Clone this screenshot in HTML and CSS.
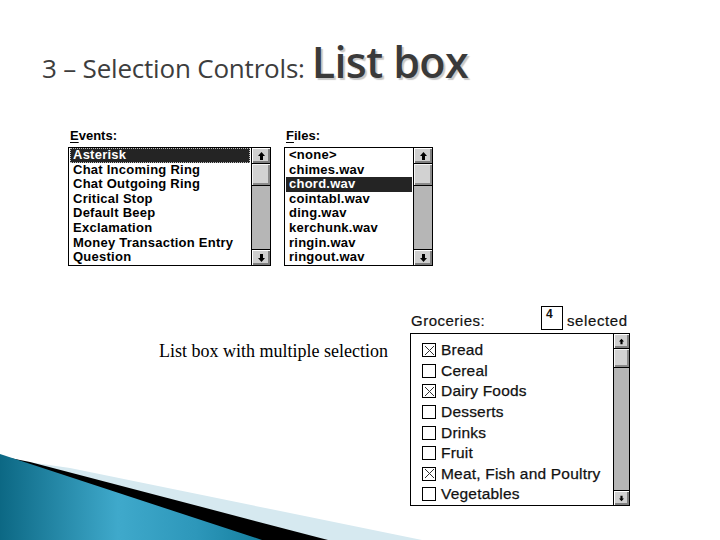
FILE: index.html
```html
<!DOCTYPE html>
<html lang="en">
<head>
<meta charset="utf-8">
<title>Selection Controls: List box</title>
<link rel="stylesheet" href="styles.css">
</head>
<body>
<div class="slide">
  <h1 class="title"><span class="sub">3 – Selection Controls:</span><span class="main">List box</span></h1>

  <div class="top-row">
    <div class="group events">
      <div class="label"><u>E</u>vents:</div>
      <div class="listbox">
        <ul class="items">
          <li class="sel focus">Asterisk</li>
          <li>Chat Incoming Ring</li>
          <li>Chat Outgoing Ring</li>
          <li>Critical Stop</li>
          <li>Default Beep</li>
          <li>Exclamation</li>
          <li>Money Transaction Entry</li>
          <li>Question</li>
        </ul>
        <div class="scrollbar">
          <div class="btn"><svg class="arrow" viewBox="0 0 7 8"><polygon points="3.5,0 7,4 5,4 5,8 2,8 2,4 0,4"/></svg></div>
          <div class="thumb"></div>
          <div class="track"></div>
          <div class="btn"><svg class="arrow" viewBox="0 0 7 8"><polygon points="3.5,8 7,4 5,4 5,0 2,0 2,4 0,4"/></svg></div>
        </div>
      </div>
    </div>

    <div class="group files">
      <div class="label"><u>F</u>iles:</div>
      <div class="listbox">
        <ul class="items">
          <li>&lt;none&gt;</li>
          <li>chimes.wav</li>
          <li class="sel">chord.wav</li>
          <li>cointabl.wav</li>
          <li>ding.wav</li>
          <li>kerchunk.wav</li>
          <li>ringin.wav</li>
          <li>ringout.wav</li>
        </ul>
        <div class="scrollbar">
          <div class="btn"><svg class="arrow" viewBox="0 0 7 8"><polygon points="3.5,0 7,4 5,4 5,8 2,8 2,4 0,4"/></svg></div>
          <div class="thumb"></div>
          <div class="track"></div>
          <div class="btn"><svg class="arrow" viewBox="0 0 7 8"><polygon points="3.5,8 7,4 5,4 5,0 2,0 2,4 0,4"/></svg></div>
        </div>
      </div>
    </div>
  </div>

  <div class="bottom-row">
    <p class="caption">List box with multiple selection</p>
    <div class="group groceries">
      <div class="gheader">
        <span class="glabel">Groceries:</span>
        <span class="count">4</span>
        <span class="selected">selected</span>
      </div>
      <div class="listbox big">
        <ul class="checks">
          <li><span class="cb on"><svg viewBox="0 0 11 11"><path d="M1 1L10 10M10 1L1 10"/></svg></span>Bread</li>
          <li><span class="cb"></span>Cereal</li>
          <li><span class="cb on"><svg viewBox="0 0 11 11"><path d="M1 1L10 10M10 1L1 10"/></svg></span>Dairy Foods</li>
          <li><span class="cb"></span>Desserts</li>
          <li><span class="cb"></span>Drinks</li>
          <li><span class="cb"></span>Fruit</li>
          <li><span class="cb on"><svg viewBox="0 0 11 11"><path d="M1 1L10 10M10 1L1 10"/></svg></span>Meat, Fish and Poultry</li>
          <li><span class="cb"></span>Vegetables</li>
        </ul>
        <div class="scrollbar small">
          <div class="btn"><svg class="arrow" viewBox="0 0 7 8"><polygon points="3.5,0 7,4 5,4 5,8 2,8 2,4 0,4"/></svg></div>
          <div class="thumb"></div>
          <div class="track"></div>
          <div class="btn"><svg class="arrow" viewBox="0 0 7 8"><polygon points="3.5,8 7,4 5,4 5,0 2,0 2,4 0,4"/></svg></div>
        </div>
      </div>
    </div>
  </div>

  <svg class="swoosh" viewBox="0 440 440 100" width="440" height="100">
    <defs>
      <linearGradient id="blue" x1="0" y1="0" x2="1" y2="0">
        <stop offset="0" stop-color="#0c6884"/>
        <stop offset="0.45" stop-color="#3fa9cb"/>
        <stop offset="0.75" stop-color="#2d97ba"/>
        <stop offset="1" stop-color="#157f9f"/>
      </linearGradient>
    </defs>
    <polygon points="0,458 70,468 422,540 0,540" fill="#d6e9f0"/>
    <polygon points="0,456 30,462 328,540 0,540" fill="#000"/>
    <polygon points="0,454 262,540 0,540" fill="url(#blue)"/>
  </svg>
</div>
</body>
</html>
```

FILE: styles.css
```css
html, body {
  margin: 0;
  padding: 0;
  background: #fff;
}

.slide {
  position: relative;
  width: 720px;
  height: 540px;
  overflow: hidden;
  background: #fff;
}

/* ---------- title ---------- */
.title {
  margin: 0;
  padding: 40px 0 0 42px;
  display: flex;
  align-items: baseline;
  height: 44px;
  line-height: 44px;
  font-weight: normal;
  color: #3d3d3d;
}

.title .sub {
  font-family: "Open Sans", "DejaVu Sans", sans-serif;
  font-size: 26px;
  letter-spacing: -0.2px;
}

.title .main {
  margin-left: 7px;
  font-family: "Open Sans", "DejaVu Sans", sans-serif;
  font-size: 43px;
  font-weight: 600;
  letter-spacing: -0.6px;
  color: #3a3a3a;
  text-shadow: 2px 2px 1px #c8c8c8;
}

/* ---------- shared list box parts ---------- */
.top-row {
  display: flex;
  gap: 13px;
  margin: 44px 0 0 68px;
}

.label {
  font-family: "Liberation Sans", Arial, sans-serif;
  font-weight: bold;
  font-size: 13px;
  line-height: 16px;
  height: 16px;
  margin: 0 0 3px 2px;
  color: #000;
}

.label u {
  text-underline-offset: 2px;
}

.listbox {
  display: flex;
  border: 1px solid #000;
  background: #fff;
  height: 117px;
}

.events .listbox { width: 201px; }
.files .listbox { width: 147px; }

.items {
  list-style: none;
  margin: 0;
  padding: 0 1px;
  flex: 1;
  font-family: "Liberation Sans", Arial, sans-serif;
  font-weight: bold;
  font-size: 13px;
  letter-spacing: 0.25px;
  color: #000;
}

.items li {
  height: 14.6px;
  line-height: 14.6px;
  padding-left: 3px;
  white-space: nowrap;
  overflow: hidden;
}

.items li.sel {
  background: #242424;
  color: #fff;
}

.items li.focus {
  outline: 1px dotted #bdbdbd;
  outline-offset: -1px;
}

.scrollbar {
  width: 18px;
  border-left: 1px solid #000;
  display: flex;
  flex-direction: column;
  background: #b4b4b4;
}

.scrollbar .btn {
  height: 15px;
  background: #cfcfcf;
  box-shadow: inset 1px 1px 0 #fff, inset -2px -2px 0 #7e7e7e;
  display: flex;
  align-items: center;
  justify-content: center;
}

.scrollbar .btn:first-child {
  border-bottom: 1px solid #000;
}

.scrollbar .btn:last-child {
  border-top: 1px solid #000;
}

.scrollbar .thumb {
  height: 21px;
  background: #d2d2d2;
  box-shadow: inset 1px 1px 0 #f4f4f4, inset -2px -2px 0 #8a8a8a;
  border-bottom: 1px solid #000;
}

.scrollbar .track {
  flex: 1;
  background: #b6b6b6;
}

.arrow {
  width: 7px;
  height: 8px;
  fill: #000;
}

/* ---------- bottom part ---------- */
.bottom-row {
  display: flex;
  margin: 40px 0 0 159px;
}

.caption {
  width: 251px;
  margin: 34px 0 0 0;
  font-family: "Liberation Serif", "Times New Roman", serif;
  font-size: 18px;
  line-height: 22px;
  color: #000;
}

.gheader {
  display: flex;
  align-items: center;
  height: 24px;
  margin-bottom: 3px;
  font-family: "Liberation Sans", Arial, sans-serif;
  font-size: 15px;
  color: #111;
  -webkit-text-stroke: 0.2px #111;
}

.glabel {
  margin-left: 1px;
  width: 130px;
  padding-top: 4px;
  letter-spacing: 0.5px;
}

.count {
  width: 20px;
  height: 22px;
  border: 1px solid #000;
  font-weight: bold;
  font-size: 12px;
  line-height: 14px;
  text-indent: 4px;
  -webkit-text-stroke: 0;
}

.selected {
  margin-left: 4px;
  padding-top: 4px;
  letter-spacing: 0.6px;
}

.listbox.big {
  width: 218px;
  height: 171px;
}

.checks {
  list-style: none;
  margin: 0;
  padding: 6px 0 0 11px;
  flex: 1;
  font-family: "Liberation Sans", Arial, sans-serif;
  font-size: 15.5px;
  letter-spacing: 0.2px;
  color: #111;
  -webkit-text-stroke: 0.25px #111;
}

.checks li {
  display: flex;
  align-items: center;
  height: 20.6px;
  white-space: nowrap;
}

.cb {
  width: 12px;
  height: 12px;
  border: 1px solid #000;
  margin-right: 5px;
  display: flex;
  align-items: center;
  justify-content: center;
  background: #fff;
}

.cb svg {
  width: 11px;
  height: 11px;
  stroke: #333;
  stroke-width: 1;
  fill: none;
}

.scrollbar.small {
  width: 15px;
}

.scrollbar.small .btn {
  height: 14px;
}

.scrollbar.small .thumb {
  height: 18px;
}

.scrollbar.small .arrow {
  width: 5px;
  height: 7px;
}

/* ---------- decorative corner ---------- */
.swoosh {
  position: absolute;
  left: 0;
  bottom: 0;
}
```
